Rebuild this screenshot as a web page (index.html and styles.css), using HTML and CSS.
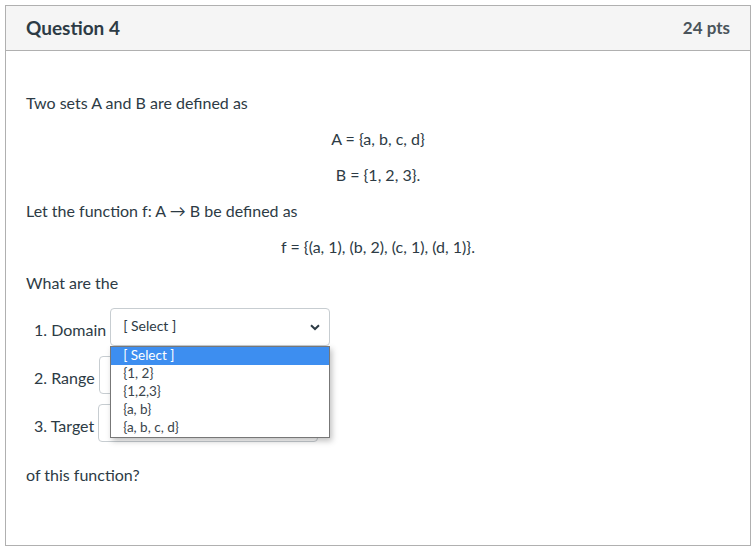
FILE: index.html
```html
<!DOCTYPE html>
<html lang="en">
<head>
    <meta charset="UTF-8">
    <title>Question 4</title>
    <link rel="stylesheet" href="styles.css">
</head>
<body>

    <div class="question">
        <div class="question-header">
            <h2>Question 4</h2>
            <span class="points">24 pts</span>
        </div>

        <div class="question-body">
            <p>Two sets A and B are defined as</p>
            <p class="center">A = {a, b, c, d}</p>
            <p class="center">B = {1, 2, 3}.</p>
            <p>Let the function f: A &rarr; B be defined as</p>
            <p class="center">f = {(a, 1), (b, 2), (c, 1), (d, 1)}.</p>
            <p>What are the</p>

            <div class="answers">
                <div class="answer-row">
                    <span class="answer-label">1. Domain</span>
                    <div class="select-wrap">
                        <div class="select">
                            <span>[ Select ]</span>
                            <svg class="chevron" width="10" height="7" viewBox="0 0 10 7"><path d="M1 1.2 L5 5 L9 1.2" fill="none" stroke="#2d3b45" stroke-width="2"/></svg>
                        </div>
                        <ul class="dropdown">
                            <li class="active">[ Select ]</li>
                            <li>{1, 2}</li>
                            <li>{1,2,3}</li>
                            <li>{a, b}</li>
                            <li>{a, b, c, d}</li>
                        </ul>
                    </div>
                </div>
                <div class="answer-row">
                    <span class="answer-label">2. Range</span>
                    <div class="select-wrap">
                        <div class="select">
                            <span>[ Select ]</span>
                            <svg class="chevron" width="10" height="7" viewBox="0 0 10 7"><path d="M1 1.2 L5 5 L9 1.2" fill="none" stroke="#2d3b45" stroke-width="2"/></svg>
                        </div>
                    </div>
                </div>
                <div class="answer-row">
                    <span class="answer-label">3. Target</span>
                    <div class="select-wrap">
                        <div class="select">
                            <span>[ Select ]</span>
                            <svg class="chevron" width="10" height="7" viewBox="0 0 10 7"><path d="M1 1.2 L5 5 L9 1.2" fill="none" stroke="#2d3b45" stroke-width="2"/></svg>
                        </div>
                    </div>
                </div>
            </div>

            <p>of this function?</p>
        </div>
    </div>

</body>
</html>
```

FILE: styles.css
```css
* {
    margin: 0;
    padding: 0;
    box-sizing: border-box;
    font-family: Lato, "Open Sans", sans-serif;
}

body {
    background: white;
    color: #2d3b45;
    padding: 5px;
}

.question {
    width: 746px;
    height: 541px;
    border: 1px solid #b0b0b0;
}

.question-header {
    height: 45px;
    background: #f5f5f5;
    border-bottom: 1px solid #b0b0b0;
    padding: 0 20px;
    display: flex;
    justify-content: space-between;
    align-items: center;
}

.question-header h2 {
    font-size: 19px;
    font-weight: bold;
    color: #2d3b45;
    margin-top: -2px;
}

.points {
    font-size: 17px;
    font-weight: bold;
    color: #4a545b;
    margin-top: -2px;
}

.question-body {
    padding: 28px 20px;
    font-size: 16px;
}

.question-body p {
    line-height: 24px;
    margin: 12px 0;
}

.question-body p.center {
    text-align: center;
}

.answers {
    padding-left: 8px;
    margin-top: 13px;
    margin-bottom: 21px;
}

.answer-row {
    display: flex;
    align-items: center;
    gap: 4px;
    margin-bottom: 10px;
}

.answer-row:last-child {
    margin-bottom: 0;
}

.answer-label {
    line-height: 24px;
    padding-top: 6px;
}

.select-wrap {
    position: relative;
}

.select {
    width: 220px;
    height: 38px;
    border: 1px solid #c7cdd1;
    border-radius: 4px;
    background: white;
    padding: 0 9px 0 12px;
    display: flex;
    align-items: center;
    justify-content: space-between;
    font-size: 14px;
    padding-bottom: 4px;
}

.chevron {
    margin-top: 4px;
}

.dropdown {
    position: absolute;
    top: 38px;
    left: 0;
    width: 220px;
    list-style: none;
    background: white;
    border: 1px solid #777;
    box-shadow: 2px 3px 6px rgba(0, 0, 0, 0.25);
    z-index: 2;
}

.dropdown li {
    height: 18px;
    line-height: 16px;
    font-size: 13.5px;
    padding-left: 12px;
    color: #3a444b;
}

.dropdown li.active {
    background: #3d8ef0;
    color: white;
}
```
